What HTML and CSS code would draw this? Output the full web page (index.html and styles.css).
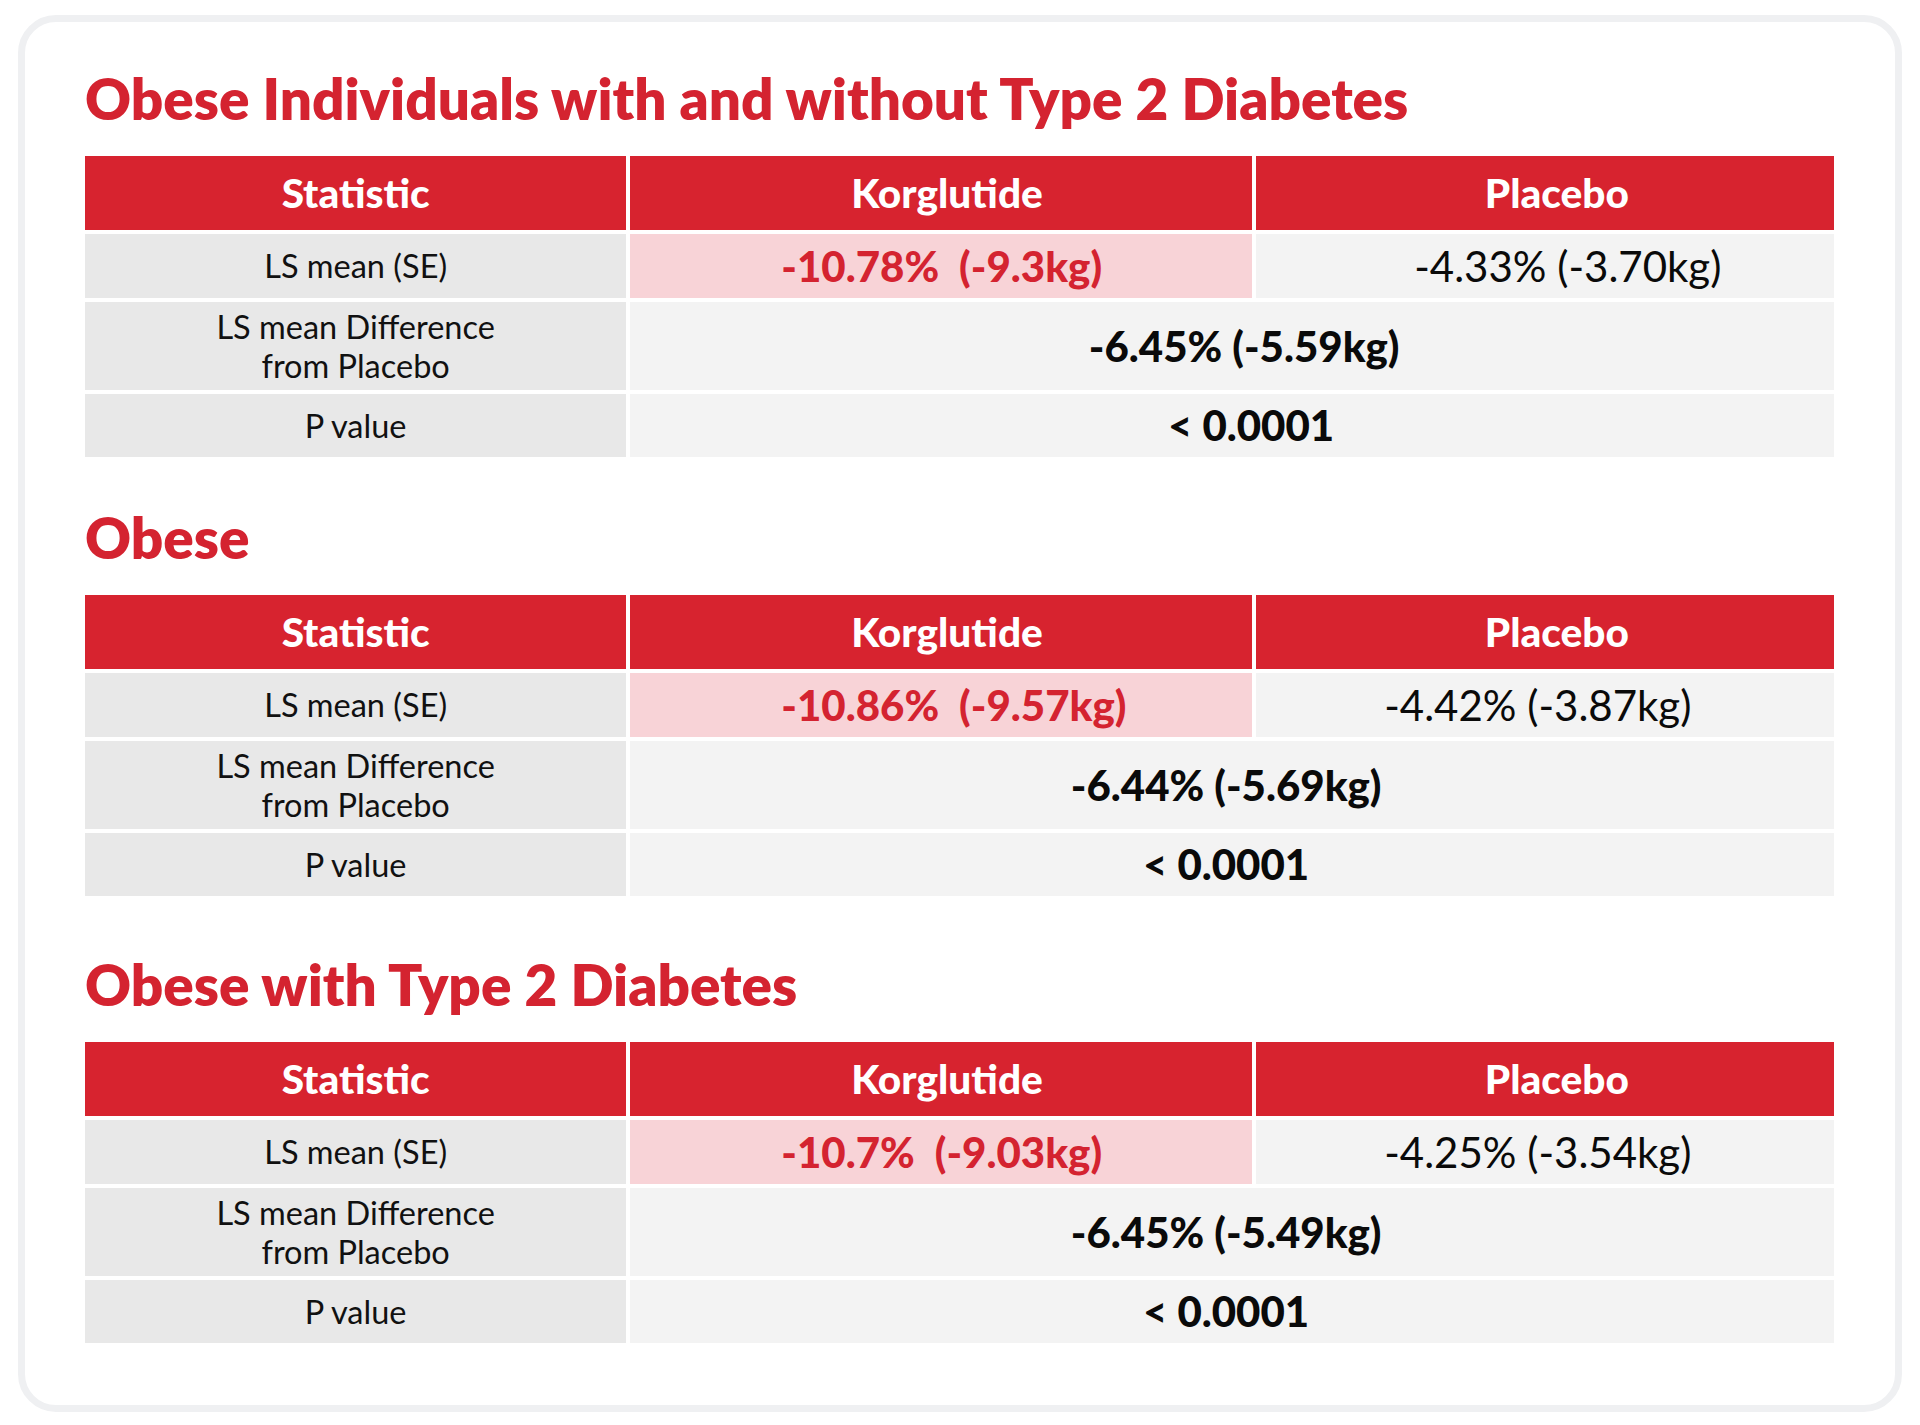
FILE: index.html
```html
<!DOCTYPE html>
<html lang="en">
<head>
<meta charset="utf-8">
<title>Korglutide results</title>
<link rel="stylesheet" href="styles.css">
</head>
<body>
<div class="card">
  <section class="sec sec-first">
    <h2 class="title">Obese Individuals with and without Type 2 Diabetes</h2>
    <div class="stats">
      <div class="th">Statistic</div>
      <div class="th th-mid">Korglutide</div>
      <div class="th th-end">Placebo</div>
      <div class="lbl">LS mean (SE)</div>
      <div class="val hl">-10.78%&nbsp; (-9.3kg)</div>
      <div class="val reg">-4.33% (-3.70kg)</div>
      <div class="lbl">LS mean Difference<br>from Placebo</div>
      <div class="val span">-6.45% (-5.59kg)</div>
      <div class="lbl">P value</div>
      <div class="val span pval">&lt; 0.0001</div>
    </div>
  </section>
  <section class="sec">
    <h2 class="title">Obese</h2>
    <div class="stats">
      <div class="th">Statistic</div>
      <div class="th th-mid">Korglutide</div>
      <div class="th th-end">Placebo</div>
      <div class="lbl">LS mean (SE)</div>
      <div class="val hl">-10.86%&nbsp; (-9.57kg)</div>
      <div class="val reg">-4.42% (-3.87kg)</div>
      <div class="lbl">LS mean Difference<br>from Placebo</div>
      <div class="val span">-6.44% (-5.69kg)</div>
      <div class="lbl">P value</div>
      <div class="val span pval">&lt; 0.0001</div>
    </div>
  </section>
  <section class="sec sec-last">
    <h2 class="title">Obese with Type 2 Diabetes</h2>
    <div class="stats">
      <div class="th">Statistic</div>
      <div class="th th-mid">Korglutide</div>
      <div class="th th-end">Placebo</div>
      <div class="lbl">LS mean (SE)</div>
      <div class="val hl">-10.7%&nbsp; (-9.03kg)</div>
      <div class="val reg">-4.25% (-3.54kg)</div>
      <div class="lbl">LS mean Difference<br>from Placebo</div>
      <div class="val span">-6.45% (-5.49kg)</div>
      <div class="lbl">P value</div>
      <div class="val span pval">&lt; 0.0001</div>
    </div>
  </section>
</div>
</body>
</html>
```

FILE: styles.css
```css
* { box-sizing: border-box; }
html, body { margin: 0; padding: 0; background: #ffffff; }
body {
  font-family: Lato, "Open Sans", "Liberation Sans", sans-serif;
  color: #111;
  padding: 15px 18px 11px 18px;
}
.card {
  width: 1884px;
  border: 7px solid #eff0f2;
  border-radius: 38px;
  background: #fff;
  padding: 43px 61px 62px 60px;
  display: flex;
  flex-direction: column;
  gap: 47px;
}
.sec { display: flex; flex-direction: column; gap: 23px; }
.sec-last { margin-top: 8px; }
.title {
  margin: 0;
  font-size: 56.6px;
  line-height: 1.2;
  font-weight: 800;
  color: #d42330;
}
.stats {
  display: grid;
  grid-template-columns: 541fr 621fr 578fr;
  grid-template-rows: 74px 64px 88px 63px;
  gap: 4px;
}
.stats > div {
  display: flex;
  align-items: center;
  justify-content: center;
  text-align: center;
}
.th {
  background: #d7232f;
  color: #fff;
  font-weight: 900;
  font-size: 40.6px;
}
.th-mid { padding-left: 12px; }
.th-end { padding-left: 24px; }
.lbl {
  background: #e8e8e8;
  font-size: 32.5px;
  line-height: 39px;
  color: #111;
}
.val {
  background: #f3f3f3;
  font-weight: 900;
  font-size: 42px;
  color: #0a0a0a;
}
.val.reg { font-weight: 400; padding-right: 14px; }
.sec-first .val.reg { padding-right: 0; padding-left: 46px; }
.sec-first .val.span { padding-left: 36px; }
.sec-first .val.pval { padding-left: 50px; }
.stats > .val.hl {
  background: #f8d3d7;
  color: #d42330;
  justify-content: flex-start;
  padding-left: 151px;
}
.val.span { grid-column: 2 / 4; padding-right: 12px; }
```
